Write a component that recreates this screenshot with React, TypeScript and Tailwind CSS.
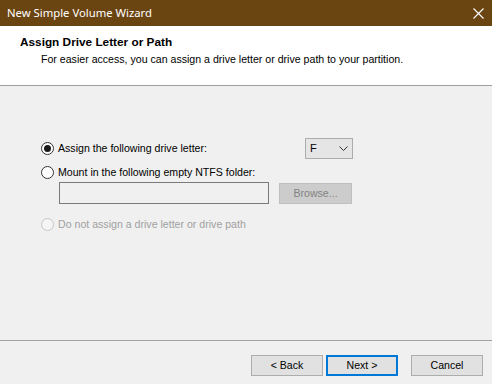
import React from "react";

function Radio({ checked, disabled }: { checked?: boolean; disabled?: boolean }) {
  return (
    <span
      className={
        "flex h-[13px] w-[13px] shrink-0 items-center justify-center rounded-full border " +
        (disabled ? "border-[#c6c6c6] bg-[#f4f4f4]" : "border-[#333333] bg-white")
      }
    >
      {checked && <span className="h-[7px] w-[7px] rounded-full bg-[#1a1a1a]" />}
    </span>
  );
}

export default function App() {
  const sans = { fontFamily: '"Liberation Sans", Arial, sans-serif' };
  return (
    <div className="flex h-[384px] w-[492px] flex-col overflow-hidden bg-[#f0f0f0] text-[10.6px] text-black" style={sans}>
      {/* title bar */}
      <div className="flex h-[26px] shrink-0 items-center justify-between bg-[#6b4511] pl-[7px] pr-[7px]">
        <span className="text-[11.3px] text-white" style={{ fontFamily: '"Noto Sans", "Open Sans", sans-serif' }}>
          New Simple Volume Wizard
        </span>
        <svg width="11" height="11" viewBox="0 0 11 11" className="mr-[1px]">
          <path d="M0.5 0.5 L10.5 10.5 M10.5 0.5 L0.5 10.5" stroke="#ffffff" strokeWidth="1.1" />
        </svg>
      </div>
      {/* header */}
      <div className="h-[60px] shrink-0 border-b border-[#a0a0a0] bg-white pl-[20px] pt-[8px]">
        <div className="text-[11.8px] font-bold leading-[16px]">Assign Drive Letter or Path</div>
        <div className="mt-[2px] pl-[21px] leading-[14px]">
          For easier access, you can assign a drive letter or drive path to your partition.
        </div>
      </div>
      {/* body */}
      <div className="flex-1 pl-[41px] pt-[52px]">
        <div className="flex h-[21px] w-[312px] items-center">
          <Radio checked />
          <span className="ml-[4px] leading-[13px]">Assign the following drive letter:</span>
          <div className="ml-auto flex h-[21px] w-[48px] items-center justify-between border border-[#acacac] bg-[#e5e5e5] pl-[4px] pr-[4px]">
            <span className="text-[11px]">F</span>
            <svg width="9" height="5" viewBox="0 0 9 5">
              <path d="M0.5 0.5 L4.5 4.5 L8.5 0.5" fill="none" stroke="#333" strokeWidth="1" />
            </svg>
          </div>
        </div>
        <div className="mt-[7px] flex h-[13px] items-center">
          <Radio />
          <span className="ml-[4px] leading-[13px]">Mount in the following empty NTFS folder:</span>
        </div>
        <div className="mt-[3px] flex items-start">
          <div className="ml-[18px] h-[22px] w-[210px] border border-[#7a7a7a] bg-[#f0f0f0]" />
          <div className="ml-[10px] mt-[1px] flex h-[21px] w-[73px] items-center justify-center border border-[#bfbfbf] bg-[#cccccc] text-[#838383]">
            Browse...
          </div>
        </div>
        <div className="mt-[14px] flex h-[13px] items-center">
          <Radio disabled />
          <span className="ml-[4px] leading-[13px] text-[#a0a0a0]">Do not assign a drive letter or drive path</span>
        </div>
      </div>
      {/* footer */}
      <div className="flex h-[44px] shrink-0 justify-end border-t border-[#a0a0a0] pr-[9px] pt-[14px]">
        <div className="flex h-[21px] w-[72px] items-center justify-center border border-[#adadad] bg-[#e1e1e1]">&lt; Back</div>
        <div className="ml-[3px] flex h-[21px] w-[72px] items-center justify-center border-2 border-[#0078d7] bg-[#e1e1e1]">Next &gt;</div>
        <div className="ml-[13px] flex h-[21px] w-[72px] items-center justify-center border border-[#adadad] bg-[#e1e1e1]">Cancel</div>
      </div>
    </div>
  );
}
